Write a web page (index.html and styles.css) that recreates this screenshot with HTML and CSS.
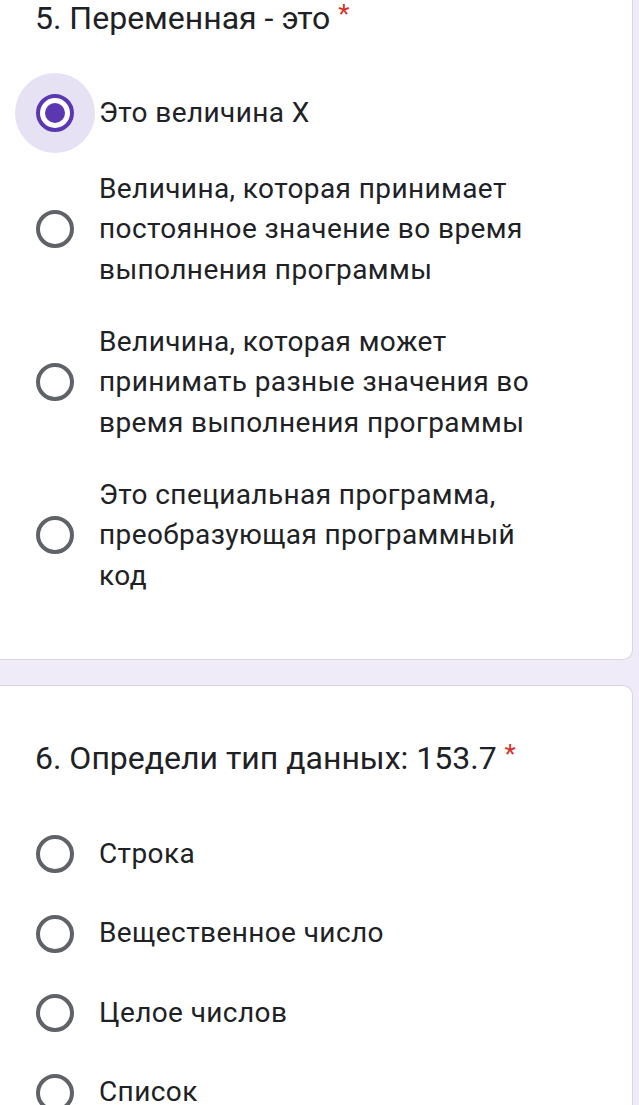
FILE: index.html
```html
<!DOCTYPE html>
<html lang="ru">
<head>
<meta charset="utf-8">
<link rel="stylesheet" href="styles.css">
</head>
<body>
<div class="page">
  <section class="card card-first">
    <div class="title">5. Переменная - это <span class="req">*</span></div>
    <div class="options">
      <div class="option">
        <span class="radio checked"><span class="dot"></span></span>
        <span class="label">Это величина X</span>
      </div>
      <div class="option">
        <span class="radio"></span>
        <span class="label">Величина, которая принимает<br>постоянное значение во время<br>выполнения программы</span>
      </div>
      <div class="option">
        <span class="radio"></span>
        <span class="label">Величина, которая может<br>принимать разные значения во<br>время выполнения программы</span>
      </div>
      <div class="option">
        <span class="radio"></span>
        <span class="label">Это специальная программа,<br>преобразующая программный<br>код</span>
      </div>
    </div>
  </section>
  <section class="card card-second">
    <div class="title">6. Определи тип данных: 153.7 <span class="req">*</span></div>
    <div class="options">
      <div class="option">
        <span class="radio"></span>
        <span class="label">Строка</span>
      </div>
      <div class="option">
        <span class="radio"></span>
        <span class="label">Вещественное число</span>
      </div>
      <div class="option">
        <span class="radio"></span>
        <span class="label">Целое числов</span>
      </div>
      <div class="option">
        <span class="radio"></span>
        <span class="label">Список</span>
      </div>
    </div>
  </section>
</div>
</body>
</html>
```

FILE: styles.css
```css
html, body {
  margin: 0;
  padding: 0;
  background: #efebf8;
  height: 100%;
  overflow: hidden;
}
body {
  font-family: Roboto, "Noto Sans", Arial, sans-serif;
  color: #202124;
}
.page {
  display: flex;
  flex-direction: column;
  gap: 25px;
}
.card {
  background: #fff;
  margin-left: -20px;
  width: 653px;
  border: 1px solid #d8d6dc;
  border-left: none;
  padding-left: 55px;
  box-sizing: border-box;
}
.card-first {
  border-top: none;
  border-radius: 0 0 10px 0;
  padding-bottom: 63px;
}
.card-second {
  border-bottom: none;
  border-radius: 0 10px 0 0;
  padding-top: 54px;
  min-height: 500px;
}
.title {
  font-size: 32px;
  line-height: 36px;
  height: 36px;
  color: #202124;
}
.req {
  color: #d93025;
  font-size: 26px;
  line-height: 28px;
  vertical-align: top;
}
.card-first .options {
  margin-top: 53px;
}
.card-second .options {
  margin-top: 54px;
}
.options {
  display: flex;
  flex-direction: column;
  gap: 31.5px;
}
.option {
  display: flex;
  align-items: center;
  min-height: 48px;
}
.radio {
  flex: none;
  width: 38px;
  height: 38px;
  box-sizing: border-box;
  border: 4px solid #5f6368;
  border-radius: 50%;
  margin-left: 1px;
  margin-right: 25px;
  display: flex;
  align-items: center;
  justify-content: center;
}
.radio.checked {
  border-color: #5b37b1;
  box-shadow: 0 0 0 21px #e7e1f4;
}
.dot {
  width: 20px;
  height: 20px;
  border-radius: 50%;
  background: #5b37b1;
}
.label {
  font-size: 28px;
  letter-spacing: 0.4px;
  line-height: 40.5px;
  color: #202124;
}
```
